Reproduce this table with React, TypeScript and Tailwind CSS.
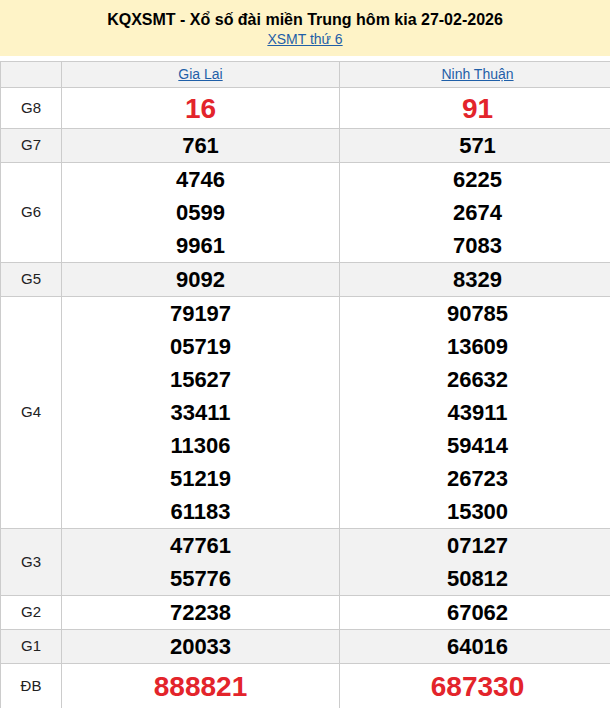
import React from 'react';

type Row = {
  label: string;
  a: string[];
  b: string[];
  gray?: boolean;
  big?: boolean;
  h?: string;
};

const rows: Row[] = [
  { label: 'G8', a: ['16'], b: ['91'], big: true, h: 'h-[41px]' },
  { label: 'G7', a: ['761'], b: ['571'], gray: true },
  { label: 'G6', a: ['4746', '0599', '9961'], b: ['6225', '2674', '7083'] },
  { label: 'G5', a: ['9092'], b: ['8329'], gray: true },
  {
    label: 'G4',
    a: ['79197', '05719', '15627', '33411', '11306', '51219', '61183'],
    b: ['90785', '13609', '26632', '43911', '59414', '26723', '15300'],
  },
  { label: 'G3', a: ['47761', '55776'], b: ['07127', '50812'], gray: true },
  { label: 'G2', a: ['72238'], b: ['67062'] },
  { label: 'G1', a: ['20033'], b: ['64016'], gray: true },
  { label: 'ĐB', a: ['888821'], b: ['687330'], big: true, h: 'h-[46px]' },
];

function Cell({ nums, big, last }: { nums: string[]; big?: boolean; last?: boolean }) {
  return (
    <div
      className={`flex flex-col items-center justify-center ${
        last ? '' : 'border-r border-[#cccccc]'
      }`}
    >
      {nums.map((n, i) => (
        <div
          key={i}
          className={
            big
              ? 'text-[28px] leading-[33px] font-bold text-[#e3242b]'
              : 'text-[22px] leading-[33px] font-bold text-black'
          }
        >
          {n}
        </div>
      ))}
    </div>
  );
}

export default function App() {
  return (
    <div className="w-[610px] h-[708px] overflow-hidden bg-white font-['Liberation_Sans',Arial,sans-serif]">
      {/* Title */}
      <div className="h-[56px] bg-[#fef3c7] flex flex-col items-center justify-center">
        <div className="text-[16px] leading-[20px] font-bold text-black mt-[2px]">
          KQXSMT - Xổ số đài miền Trung hôm kia 27-02-2026
        </div>
        <a href="#" className="text-[14px] leading-[18px] text-[#1f5fa8] underline">
          XSMT thứ 6
        </a>
      </div>

      {/* Table */}
      <div className="mt-[5px] border-t border-l border-[#cccccc] w-[615px]">
        <div className="grid grid-cols-[61px_278px_1fr] h-[26px] bg-[#f2f2f2] border-b border-[#cccccc]">
          <div className="border-r border-[#cccccc]" />
          <div className="border-r border-[#cccccc] flex items-center justify-center">
            <a href="#" className="text-[14px] text-[#1f5fa8] underline">Gia Lai</a>
          </div>
          <div className="flex items-center justify-center">
            <a href="#" className="text-[14px] text-[#1f5fa8] underline">Ninh Thuận</a>
          </div>
        </div>

        {rows.map(r => (
          <div
            key={r.label}
            className={`grid grid-cols-[61px_278px_1fr] border-b border-[#cccccc] ${
              r.gray ? 'bg-[#f2f2f2]' : 'bg-white'
            } ${r.h ?? ''}`}
          >
            <div className="border-r border-[#cccccc] flex items-center justify-center text-[15px] text-[#222]">
              {r.label}
            </div>
            <Cell nums={r.a} big={r.big} />
            <Cell nums={r.b} big={r.big} last />
          </div>
        ))}
      </div>
    </div>
  );
}
